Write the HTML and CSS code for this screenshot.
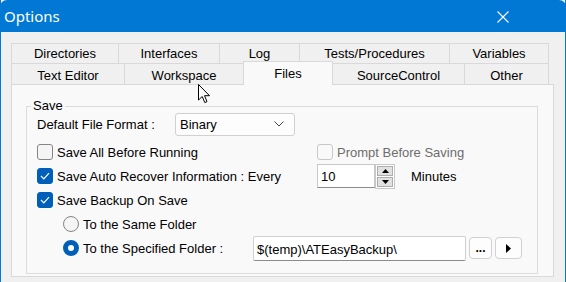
FILE: index.html
```html
<!DOCTYPE html>
<html lang="en">
<head>
  <meta charset="UTF-8">
  <title>Options</title>
  <link rel="stylesheet" href="styles.css">
</head>
<body>
  <div class="window">
    <div class="titlebar">
      <span class="title">Options</span>
      <svg class="close" width="12" height="12" viewBox="0 0 12 12">
        <path d="M0.5 0.5 L11.5 11.5 M11.5 0.5 L0.5 11.5" stroke="#fff" stroke-width="1.1" fill="none"/>
      </svg>
    </div>
    <div class="content">
      <div class="tabs">
        <div class="tab-row">
          <div class="tab" style="width:108px">Directories</div>
          <div class="tab" style="width:102px">Interfaces</div>
          <div class="tab" style="width:81px">Log</div>
          <div class="tab" style="width:151px">Tests/Procedures</div>
          <div class="tab" style="width:100px">Variables</div>
        </div>
        <div class="tab-row">
          <div class="tab" style="width:114px">Text Editor</div>
          <div class="tab" style="width:120px">Workspace</div>
          <div class="tab active" style="width:90px">Files</div>
          <div class="tab" style="width:133px">SourceControl</div>
          <div class="tab" style="width:85px">Other</div>
        </div>
      </div>
      <div class="panel">
        <fieldset class="group">
          <legend>Save</legend>
          <div class="row row-format">
            <span class="label">Default File Format :</span>
            <div class="select">
              <span>Binary</span>
              <svg width="10" height="6" viewBox="0 0 10 6"><path d="M0.5 0.5 L5 5 L9.5 0.5" stroke="#444" fill="none"/></svg>
            </div>
          </div>
          <div class="row">
            <label class="check first"><span class="box"></span>Save All Before Running</label>
            <label class="check disabled"><span class="box"></span>Prompt Before Saving</label>
          </div>
          <div class="row">
            <label class="check first"><span class="box on"><svg width="10" height="8" viewBox="0 0 10 8"><path d="M1 4 L3.8 6.8 L9 1.2" stroke="#fff" stroke-width="1.2" fill="none"/></svg></span>Save Auto Recover Information : Every</label>
            <div class="spin">
              <span class="spin-input">10</span>
              <div class="spin-buttons">
                <span class="spin-btn"><svg width="7" height="4" viewBox="0 0 7 4"><path d="M0 4 L3.5 0 L7 4 Z" fill="#000"/></svg></span>
                <span class="spin-btn"><svg width="7" height="4" viewBox="0 0 7 4"><path d="M0 0 L3.5 4 L7 0 Z" fill="#000"/></svg></span>
              </div>
            </div>
            <span class="minutes">Minutes</span>
          </div>
          <div class="row">
            <label class="check"><span class="box on"><svg width="10" height="8" viewBox="0 0 10 8"><path d="M1 4 L3.8 6.8 L9 1.2" stroke="#fff" stroke-width="1.2" fill="none"/></svg></span>Save Backup On Save</label>
          </div>
          <div class="row sub">
            <label class="radio"><span class="dot"></span>To the Same Folder</label>
          </div>
          <div class="row sub">
            <label class="radio specified"><span class="dot on"></span>To the Specified Folder :</label>
            <span class="path">$(temp)\ATEasyBackup\</span>
            <span class="btn btn-browse">...</span>
            <span class="btn btn-go"><svg width="5" height="9" viewBox="0 0 5 9"><path d="M0 0 L5 4.5 L0 9 Z" fill="#000"/></svg></span>
          </div>
        </fieldset>
      </div>
    </div>
    <svg class="cursor" width="13" height="20" viewBox="0 0 13 20">
      <path d="M0.5 0.5 L0.5 16 L4.2 12.5 L6.8 18.6 L9 17.6 L6.5 11.7 L11.5 11.7 Z" fill="#fff" stroke="#000" stroke-width="1" stroke-linejoin="round"/>
    </svg>
  </div>
</body>
</html>
```

FILE: styles.css
```css
* {
  box-sizing: border-box;
}

body {
  margin: 0;
  width: 566px;
  height: 282px;
  overflow: hidden;
  background-color: #f0f0f0;
  font-family: "Liberation Sans", Arial, sans-serif;
  font-size: 13px;
  color: #000;
}

.window {
  position: relative;
  height: 282px;
  border-left: 1px solid #0078d4;
  border-right: 1px solid #0078d4;
}

.titlebar {
  height: 32px;
  background-color: #0078d4;
  display: flex;
  align-items: center;
  justify-content: space-between;
  padding: 0 57px 0 4px;
  margin: 0 -1px;
  border-radius: 7px 7px 0 0;
}

.title {
  color: #fff;
  font-family: "Segoe UI", "Noto Sans", sans-serif;
  font-size: 15px;
  margin-top: -1px;
}

.close {
  margin-top: 1px;
}

.content {
  padding: 11px 11px 0 10px;
}

.tab-row {
  display: flex;
  height: 20px;
}

.tab-row + .tab-row {
  height: 21px;
}

.tab {
  border: 1px solid #d9d9d9;
  border-bottom: none;
  margin-left: -1px;
  background-color: #f0f0f0;
  display: flex;
  align-items: center;
  justify-content: center;
  white-space: nowrap;
}

.tab-row + .tab-row .tab {
  padding-top: 2px;
}

.tab:first-child {
  margin-left: 0;
}

.tab-row + .tab-row .tab.active {
  background-color: #f9f9f9;
  margin-top: -2px;
  height: 24px;
  position: relative;
  z-index: 1;
  padding-top: 0;
}

.panel {
  height: 193px;
  background-color: #f9f9f9;
  border: 1px solid #d9d9d9;
  padding: 13px 15px 0 14px;
}

.group {
  margin: 0;
  height: 176px;
  border: 1px solid #dcdcdc;
  padding: 0 0 0 10px;
}

.group legend {
  padding: 0 2px;
  margin-left: -6px;
  line-height: 16px;
}

.row {
  display: flex;
  align-items: center;
  height: 24px;
  white-space: nowrap;
}

.row-format {
  height: 20px;
  margin-bottom: 6px;
}

.label {
  width: 138px;
}

.select {
  width: 120px;
  height: 23px;
  border: 1px solid #d0d0d0;
  border-radius: 3px;
  background-color: #fdfdfd;
  display: flex;
  align-items: center;
  justify-content: space-between;
  padding: 0 10px 0 4px;
}

.check,
.radio {
  display: flex;
  align-items: center;
}

.check.first {
  width: 280px;
  flex-shrink: 0;
}

.box {
  width: 16px;
  height: 16px;
  border: 1px solid #858585;
  border-radius: 3px;
  background-color: #f5f5f5;
  margin-right: 4px;
  display: flex;
  align-items: center;
  justify-content: center;
}

.box.on {
  background-color: #005fb8;
  border-color: #005fb8;
}

.check.disabled {
  color: #6d6d6d;
}

.check.disabled .box {
  border-color: #c8c8c8;
  background-color: #f9f9f9;
}

.spin {
  display: flex;
}

.spin-input {
  width: 58px;
  height: 24px;
  background-color: #fff;
  border: 1px solid #c8c8c8;
  border-bottom-color: #8c8c8c;
  padding: 4px 0 0 3px;
}

.spin-buttons {
  display: flex;
  flex-direction: column;
  border: 1px solid #c8c8c8;
  background-color: #fff;
  padding: 1px;
  gap: 1px;
}

.spin-btn {
  width: 16px;
  height: 10px;
  background-color: #e1e1e1;
  border: 1px solid #adadad;
  display: flex;
  align-items: center;
  justify-content: center;
}

.minutes {
  margin-left: 16px;
}

.row.sub {
  padding-left: 26px;
}

.dot {
  width: 16px;
  height: 16px;
  border: 1px solid #858585;
  border-radius: 50%;
  background-color: #f5f5f5;
  margin-right: 4px;
}

.dot.on {
  border: 5px solid #005fb8;
  background-color: #fff;
}

.radio.specified {
  width: 190px;
}

.path {
  width: 213px;
  height: 25px;
  background-color: #fff;
  border: 1px solid #d0d0d0;
  border-bottom-color: #8c8c8c;
  border-radius: 2px;
  padding: 5px 0 0 3px;
}

.btn {
  height: 22px;
  border: 1px solid #d0d0d0;
  border-radius: 4px;
  background-color: #fdfdfd;
  margin-left: 3px;
  display: flex;
  align-items: center;
  justify-content: center;
  font-weight: bold;
  font-size: 12px;
}

.btn-browse {
  width: 23px;
}

.btn-go {
  width: 27px;
}

.cursor {
  position: absolute;
  left: 197px;
  top: 84px;
}
```
